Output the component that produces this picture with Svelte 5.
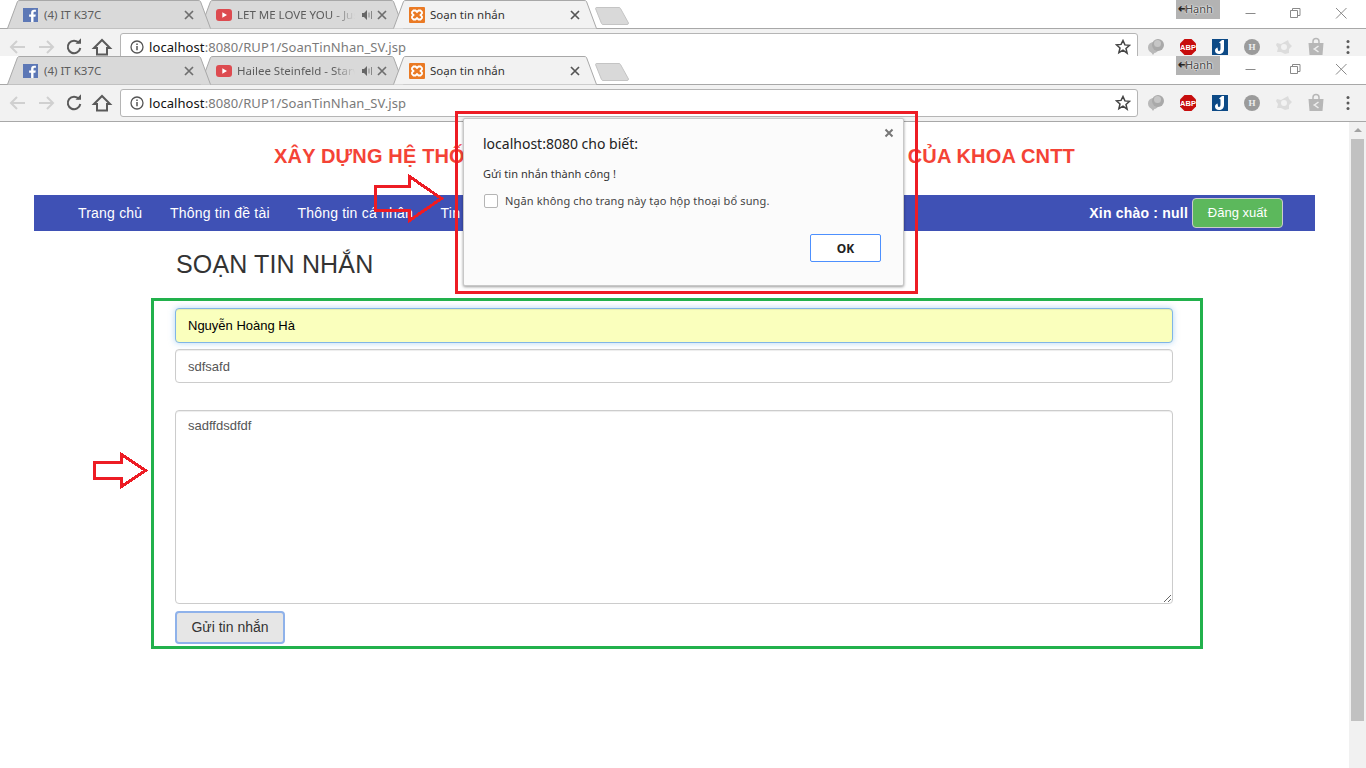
<script>
  const windows = [
    { id: 'back', second: 'LET ME LOVE YOU - Justin Bieber', crop: true },
    { id: 'front', second: 'Hailee Steinfeld - Starving', crop: false }
  ];
  const links = ['Trang chủ', 'Thông tin đề tài', 'Thông tin cá nhân', 'Tin nhắn', 'Đăng ký đề tài'];
</script>

{#snippet chrome(win)}
  <div class="chrome" class:crop={win.crop}>
    <div class="strip">
      <div class="tab first">
        <svg class="shape" viewBox="0 0 204 29"><path d="M0.5 28.5 L10.5 1.5 Q11 0.5 13 0.5 H191 Q193 0.5 193.5 1.5 L203.5 28.5" fill="#d9d9d9" stroke="#a8a8a8" /></svg>
        <svg class="fav" viewBox="0 0 16 16"><rect y="1" width="15" height="14" fill="#5d78b6" /><path d="M10.500 15V9.800h1.900l.4-2.300h-2.300V6c0-.8.3-1.200 1.200-1.200h1.200V2.800c-.4 0-1-.1-1.800-.1-1.900 0-3 1.100-3 3.100v1.700H6.100v2.300h2V15z" fill="#fff" /></svg>
        <span class="title">(4) IT K37C</span>
        <svg class="x" viewBox="0 0 10 10"><path d="M1 1l8 8M9 1l-8 8" /></svg>
      </div>
      <div class="tab">
        <svg class="shape" viewBox="0 0 204 29"><path d="M0.5 28.5 L10.5 1.5 Q11 0.5 13 0.5 H191 Q193 0.5 193.5 1.5 L203.5 28.5" fill="#d9d9d9" stroke="#a8a8a8" /></svg>
        <svg class="fav" viewBox="0 0 16 16"><rect y="2" width="16" height="12" rx="3" fill="#dd4b50" /><path d="M6.300 5.200v5.600L11 8z" fill="#fff" /></svg>
        <span class="title fade">{win.second}</span>
        <svg class="sound" viewBox="0 0 11 10"><path d="M0 3h2l3-3v10L2 7H0z" fill="#666" /><path d="M7 2.500v5M9.500 1v8" stroke="#888" fill="none" /></svg>
        <svg class="x" viewBox="0 0 10 10"><path d="M1 1l8 8M9 1l-8 8" /></svg>
      </div>
      <div class="tab active">
        <svg class="shape" viewBox="0 0 204 29"><path d="M0.5 28.5 L10.5 1.5 Q11 0.5 13 0.5 H191 Q193 0.5 193.5 1.5 L203.5 28.5" fill="#f2f2f2" stroke="#a8a8a8" /></svg>
        <svg class="fav" viewBox="0 0 16 16"><rect width="16" height="16" rx="1" fill="#ea7a24" /><path d="M4.500 3.500H6.500L8 5l1.500-1.500h2l1.500 1.500v1.500L11.500 8 13 9.500V11l-1.500 1.500h-2L8 11l-1.500 1.500h-2L3 11V9.500L4.500 8 3 6.500V5z" fill="none" stroke="#fff" stroke-width="1.800" /></svg>
        <span class="title dark">Soạn tin nhắn</span>
        <svg class="x dark" viewBox="0 0 10 10"><path d="M1 1l8 8M9 1l-8 8" /></svg>
      </div>
      <svg class="newtab" viewBox="0 0 34 18"><path d="M0.500 1.500 Q0.500 0.500 2 0.500 H24 Q25 0.500 25.500 1.500 L33.500 16 Q33.500 17.500 32 17.500 H8 Q7 17.500 6.500 16.500z" fill="#d9d9d9" stroke="#c4c4c4" /></svg>

      <div class="winctl">
        <span class="user"><b>↔</b>Hạnh</span>
        <svg class="ctl" viewBox="0 0 45 26"><path d="M17.500 13.500h10" /></svg>
        <svg class="ctl" viewBox="0 0 45 26"><path d="M17.500 10.500h7v7h-7zM19.500 10.500v-2h7.500v7h-2.500" /></svg>
        <svg class="ctl" viewBox="0 0 45 26"><path d="M18 8l10.500 10.500M28.500 8L18 18.500" /></svg>
      </div>
    </div>

    <div class="toolbar">
      <svg class="tool" viewBox="0 0 28 28"><path d="M21 14H7M13 8l-6 6 6 6" class="off" /></svg>
      <svg class="tool" viewBox="0 0 28 28"><path d="M7 14h14M15 8l6 6-6 6" class="off" /></svg>
      <svg class="tool" viewBox="0 0 28 28"><path d="M19 10a6.300 6.300 0 1 0 1.300 5" class="on" /><path d="M15.500 10.800h5.500V5.300z" fill="#5a5a5a" /></svg>
      <svg class="tool" viewBox="0 0 28 28"><path d="M6 15l8-8 8 8h-3v6.500H9V15z" class="on" /></svg>
      <div class="omni">
        <svg class="info" viewBox="0 0 14 14"><circle cx="7" cy="7" r="6" fill="none" stroke="#555" stroke-width="1.300" /><path d="M7 6v4.200M7 3.600v1.300" stroke="#555" stroke-width="1.500" /></svg>
        <span class="url"><span class="host">localhost</span>:8080/RUP1/SoanTinNhan_SV.jsp</span>
        <svg class="star" viewBox="0 0 16 16"><path d="M8 1.500l1.900 4.400 4.700.4-3.600 3.100 1.100 4.700L8 11.100l-4.100 2.500L5 8.900 1.400 5.800l4.700-.4z" fill="none" stroke="#444" stroke-width="1.500" /></svg>
      </div>
      <div class="exts">
        <svg class="ext" viewBox="0 0 20 20"><circle cx="7.500" cy="10.500" r="5.500" fill="#b9b9b9" /><path d="M5 15l2 3 2-3z" fill="#b9b9b9" /><circle cx="12" cy="8" r="6" fill="#a9a9a9" /><circle cx="11.500" cy="6.500" r="3.500" fill="#c6c6c6" /></svg>
        <svg class="ext" viewBox="0 0 20 20"><path d="M6.500 2h7L18 6.500v7L13.500 18h-7L2 13.500v-7z" fill="#c70d0d" /><text x="10" y="13" class="abp">ABP</text></svg>
        <svg class="ext" viewBox="0 0 20 20"><rect x="2" y="2" width="16" height="16" fill="#0d4a86" /><path d="M14 3v9c0 3-2 5-5 5-2.500 0-4-1.500-4-3.500 0-1.500 1-2.500 2.500-3L8 13c0 .5.500 1 1 1 .800 0 1.500-.8 1.500-2.500V6.500L9 5.500l3-2.500z" fill="#fff" /></svg>
        <svg class="ext" viewBox="0 0 20 20"><circle cx="10" cy="10" r="8" fill="#9b9b9b" /><text x="10" y="13" class="h">H</text></svg>
        <svg class="ext" viewBox="0 0 20 20"><path d="M3 6l4 1 7-4 1 3 3 3-3 3 0 4-4 1-4-2-4 0 1-4-2-3z" fill="#dcdcdc" /><circle cx="10" cy="10" r="3" fill="#f2f2f2" /></svg>
        <svg class="ext" viewBox="0 0 20 20"><path d="M2.500 6h15l-1 12h-13z" fill="#b7b7b7" /><path d="M7 8V4.500a3 3 0 0 1 6 0V8" fill="none" stroke="#b7b7b7" stroke-width="1.500" /><path d="M12.500 9l-4 3 4 3M8.500 12h-1" fill="none" stroke="#eee" stroke-width="1.500" /></svg>
        <svg class="ext" viewBox="0 0 20 20"><circle cx="10" cy="4.500" r="1.500" fill="#5a5a5a" /><circle cx="10" cy="10" r="1.500" fill="#5a5a5a" /><circle cx="10" cy="15.500" r="1.500" fill="#5a5a5a" /></svg>
      </div>
    </div>
  </div>
{/snippet}

<div class="screen">
  {#each windows as win (win.id)}
    {@render chrome(win)}
  {/each}

  <div class="viewport">
    <main class="page">
      <h2 class="headline">XÂY DỰNG HỆ THỐNG QUẢN LÍ ĐỀ TÀI NGHIÊN CỨU THỰC TẬP CỦA KHOA CNTT</h2>
      <nav class="nav">
        <div class="links">
          {#each links as link}
            <a href="#top">{link}</a>
          {/each}
        </div>
        <div class="hello">
          <strong>Xin chào : null</strong>
          <button class="logout">Đăng xuất</button>
        </div>
      </nav>
      <section class="compose">
        <h1>SOẠN TIN NHẮN</h1>
        <form class="form">
          <input class="field autofill" value="Nguyễn Hoàng Hà" />
          <input class="field" value="sdfsafd" />
          <textarea class="field area">sadffdsdfdf</textarea>
          <button class="send" type="button">Gửi tin nhắn</button>
        </form>
      </section>
    </main>
    <div class="scrollbar">
      <span class="up"></span>
      <span class="thumb"></span>
    </div>
  </div>

  <div class="green-box"></div>
  <div class="red-box"></div>
  <svg class="arrow arrow-top" viewBox="0 0 72 49"><path d="M1.500 12.500h34v-10l32 22-32 22v-10h-34z" /></svg>
  <svg class="arrow arrow-left" viewBox="0 0 57 37"><path d="M1.500 10.500h27v-8l24 16-24 16v-8h-27z" /></svg>

  <div class="dialog">
    <svg class="close" viewBox="0 0 10 10"><path d="M1.500 1.500l7 7M8.500 1.500l-7 7" /></svg>
    <p class="origin">localhost:8080 cho biết:</p>
    <p class="message">Gửi tin nhắn thành công !</p>
    <label class="suppress"><span class="box"></span>Ngăn không cho trang này tạo hộp thoại bổ sung.</label>
    <div class="actions"><button class="ok">OK</button></div>
  </div>
</div>

<style>
  :global(body) {
    margin: 0;
    overflow: hidden;
    background: #fff;
  }

  .screen {
    position: relative;
    width: 1366px;
    height: 768px;
    overflow: hidden;
    display: flex;
    flex-direction: column;
    font-family: 'Liberation Sans', Arial, sans-serif;
  }

  /* browser frame */
  .chrome {
    flex: none;
    height: 66px;
    background: #fff;
    overflow: hidden;
    font-family: 'Noto Sans', 'Open Sans', sans-serif;
  }
  .chrome.crop {
    height: 56px;
  }
  .strip {
    position: relative;
    display: flex;
    height: 29px;
    padding-left: 7px;
    box-sizing: border-box;
    border-bottom: 1px solid #a8a8a8;
  }
  .tab {
    position: relative;
    flex: none;
    width: 204px;
    height: 29px;
    margin-right: -11px;
    display: flex;
    align-items: center;
    padding: 0 17px 0 16px;
    box-sizing: border-box;
  }
  .tab.first {
    z-index: 1;
  }
  .tab.active {
    z-index: 2;
  }
  .shape {
    position: absolute;
    left: 0;
    top: 0;
    width: 204px;
    height: 29px;
  }
  .fav {
    position: relative;
    flex: none;
    width: 16px;
    height: 16px;
  }
  .title {
    position: relative;
    flex: 1;
    min-width: 0;
    margin-left: 5px;
    font-size: 11.5px;
    line-height: 16px;
    color: #5c5c5c;
    white-space: nowrap;
    overflow: hidden;
  }
  .title.dark {
    color: #333;
  }
  .title.fade {
    mask-image: linear-gradient(to right, #000 82%, transparent 100%);
  }
  .sound {
    position: relative;
    flex: none;
    width: 11px;
    height: 10px;
    margin: 0 4px 0 7px;
  }
  .x {
    position: relative;
    flex: none;
    width: 10px;
    height: 10px;
    fill: none;
    stroke: #6e6e6e;
    stroke-width: 1.700;
  }
  .x.dark {
    stroke: #555;
  }
  .newtab {
    flex: none;
    width: 34px;
    height: 18px;
    margin: 7px 0 0 9px;
    position: relative;
    z-index: 1;
  }
  .winctl {
    position: absolute;
    right: 3px;
    top: 0;
    display: flex;
    align-items: flex-start;
  }
  .user {
    width: 42px;
    height: 19px;
    margin-right: 8px;
    padding-left: 2px;
    background: #b3b3b3;
    color: #484848;
    font-size: 11px;
    line-height: 17px;
    white-space: nowrap;
    overflow: hidden;
    text-shadow: 0 0 2px #fff, 0 0 2px #fff;
  }
  .user b {
    color: #222;
    font-family: 'DejaVu Sans', sans-serif;
    font-size: 13px;
    font-weight: 700;
    letter-spacing: -4px;
    text-shadow: none;
  }
  .ctl {
    width: 45px;
    height: 26px;
    fill: none;
    stroke: #8a8a8a;
  }

  .toolbar {
    display: flex;
    align-items: center;
    height: 36px;
    padding-left: 4px;
    background: #f2f2f2;
    border-bottom: 1px solid #a8a8a8;
  }
  .tool {
    flex: none;
    width: 28px;
    height: 28px;
  }
  .off {
    fill: none;
    stroke: #d0d0d0;
    stroke-width: 2;
  }
  .on {
    fill: none;
    stroke: #5a5a5a;
    stroke-width: 2;
  }
  .omni {
    flex: none;
    display: flex;
    align-items: center;
    width: 1018px;
    height: 28px;
    margin-left: 4px;
    box-sizing: border-box;
    padding: 0 6px 0 9px;
    background: #fff;
    border: 1px solid #b5b5b5;
    border-radius: 3px;
  }
  .info {
    flex: none;
    width: 14px;
    height: 14px;
  }
  .url {
    flex: 1;
    margin-left: 5px;
    font-size: 13px;
    letter-spacing: 0.08px;
    color: #7a7a7a;
  }
  .host {
    color: #111;
  }
  .star {
    flex: none;
    width: 16px;
    height: 16px;
  }
  .exts {
    display: flex;
    margin-left: 2px;
  }
  .ext {
    flex: none;
    width: 20px;
    height: 20px;
    margin: 0 6px;
  }
  .abp {
    fill: #fff;
    font: 700 7.500px 'Liberation Sans', sans-serif;
    text-anchor: middle;
  }
  .h {
    fill: #eee;
    font: 700 9px 'Liberation Serif', serif;
    text-anchor: middle;
  }

  /* page */
  .viewport {
    flex: 1;
    min-height: 0;
    display: flex;
  }
  .page {
    flex: 1;
    min-width: 0;
  }
  .headline {
    margin: 0;
    padding-top: 22px;
    height: 73px;
    box-sizing: border-box;
    text-align: center;
    font-size: 20px;
    line-height: 24px;
    font-weight: 700;
    letter-spacing: 0.15px;
    color: #f44336;
  }
  .nav {
    display: flex;
    align-items: center;
    justify-content: space-between;
    height: 36px;
    margin: 0 34px;
    padding: 0 32px 0 44px;
    background: #3f51b5;
    color: #fff;
    font-size: 14px;
    letter-spacing: 0.2px;
  }
  .links {
    display: flex;
    gap: 27.700px;
  }
  .links a {
    color: #fff;
    text-decoration: none;
  }
  .hello {
    display: flex;
    align-items: center;
    gap: 4px;
  }
  .logout {
    width: 91px;
    height: 30px;
    padding: 0 0 2px;
    font: 13px 'Liberation Sans', sans-serif;
    color: #fff;
    background: #5cb85c;
    border: 1px solid #ccc;
    border-radius: 4px;
  }
  .compose {
    width: 998px;
    margin-left: 175px;
  }
  .compose h1 {
    margin: 0;
    height: 77px;
    padding: 18px 0 0 1px;
    box-sizing: border-box;
    font-size: 25px;
    line-height: 31px;
    font-weight: 400;
    letter-spacing: 0.15px;
    color: #333;
  }
  .form {
    display: flex;
    flex-direction: column;
  }
  .field {
    display: block;
    width: 100%;
    height: 34px;
    margin: 0;
    padding: 6px 12px;
    box-sizing: border-box;
    font: 13px/20px 'Liberation Sans', sans-serif;
    color: #555;
    background: #fff;
    border: 1px solid #ccc;
    border-radius: 4px;
    box-shadow: inset 0 1px 1px rgba(0, 0, 0, 0.075);
    outline: none;
  }
  .field + .field {
    margin-top: 6px;
  }
  .autofill {
    height: 35px;
    color: #000;
    background: #faffbd;
    border-color: #80b5e6;
    box-shadow: inset 0 1px 1px rgba(0, 0, 0, 0.075), 0 0 6px rgba(102, 175, 233, 0.5);
  }
  .field.area {
    height: 194px;
    margin-top: 27px;
    padding-top: 5px;
    resize: vertical;
  }
  .send {
    align-self: flex-start;
    width: 110px;
    height: 33px;
    margin-top: 7px;
    padding: 0 0 2px;
    font: 14px 'Liberation Sans', sans-serif;
    color: #333;
    background: #e6e6e6;
    border: 2px solid #8fb2ea;
    border-radius: 4px;
  }
  .scrollbar {
    position: relative;
    flex: none;
    width: 17px;
    background: #f1f1f1;
    display: flex;
    flex-direction: column;
    align-items: center;
  }
  .up {
    width: 0;
    height: 0;
    margin-top: 6px;
    border-left: 4px solid transparent;
    border-right: 4px solid transparent;
    border-bottom: 4px solid #a3a3a3;
  }
  .thumb {
    width: 13px;
    height: 582px;
    margin-top: 7px;
    background: #c1c1c1;
  }

  /* annotations drawn over the screenshot */
  .green-box {
    position: absolute;
    left: 151px;
    top: 298px;
    width: 1046px;
    height: 345px;
    border: 3px solid #22b14c;
  }
  .red-box {
    position: absolute;
    left: 455px;
    top: 111px;
    width: 457px;
    height: 177px;
    border: 3px solid #ed1c24;
    z-index: 4;
  }
  .arrow {
    position: absolute;
    fill: none;
    stroke: #ed1c24;
    stroke-width: 3;
    shape-rendering: crispEdges;
    z-index: 3;
  }
  .arrow-top {
    left: 374px;
    top: 174px;
    width: 72px;
    height: 49px;
  }
  .arrow-left {
    left: 93px;
    top: 452px;
    width: 57px;
    height: 37px;
  }

  /* alert dialog */
  .dialog {
    position: absolute;
    left: 463px;
    top: 118px;
    width: 441px;
    height: 168px;
    box-sizing: border-box;
    padding: 16px 22px 0 19px;
    background: #fbfbfb;
    border: 1px solid #c8c8c8;
    border-radius: 2px;
    box-shadow: 0 1px 3px rgba(0, 0, 0, 0.4);
    font-family: 'Noto Sans', 'Open Sans', sans-serif;
    z-index: 5;
  }
  .close {
    position: absolute;
    right: 9px;
    top: 9px;
    width: 10px;
    height: 10px;
    fill: none;
    stroke: #777;
    stroke-width: 2;
  }
  .origin {
    margin: 0;
    font-size: 14px;
    line-height: 18px;
    color: #222;
  }
  .message {
    margin: 13px 0 0;
    font-size: 11px;
    line-height: 15px;
    letter-spacing: 0.05px;
    color: #333;
  }
  .suppress {
    display: flex;
    align-items: center;
    margin-top: 12px;
    font-size: 11px;
    line-height: 15px;
    letter-spacing: 0.15px;
    color: #444;
  }
  .box {
    flex: none;
    width: 12px;
    height: 12px;
    margin: 0 7px 0 1px;
    background: #fff;
    border: 1px solid #b5b5b5;
    border-radius: 2px;
  }
  .actions {
    display: flex;
    justify-content: flex-end;
    margin-top: 26px;
  }
  .ok {
    width: 71px;
    height: 28px;
    padding: 0;
    font: 700 12px 'Noto Sans', sans-serif;
    color: #222;
    background: #fff;
    border: 1px solid #4d90fe;
    border-radius: 2px;
  }
</style>
